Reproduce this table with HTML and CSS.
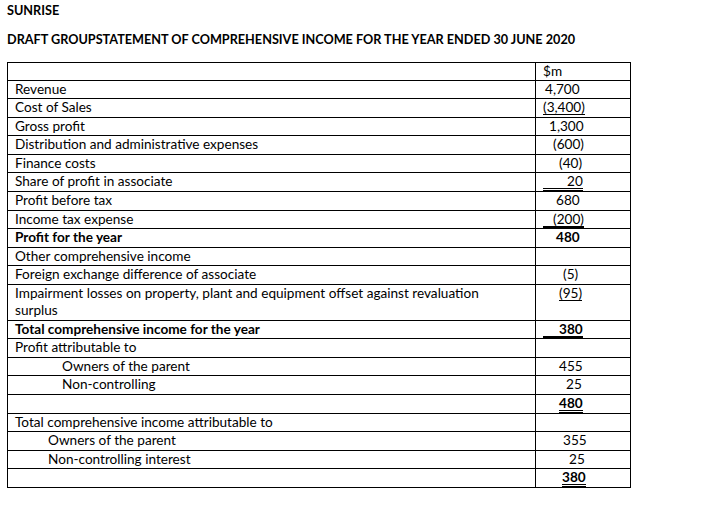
FILE: index.html
```html
<!DOCTYPE html>
<html>
<head>
<meta charset="utf-8">
<link rel="stylesheet" href="styles.css">
</head>
<body>
<div class="page">
  <h1 class="title first">SUNRISE</h1>
  <h2 class="title heading">DRAFT GROUPSTATEMENT OF COMPREHENSIVE INCOME FOR THE YEAR ENDED 30 JUNE 2020</h2>
  <table class="stmt">
    <tr class="head"><td class="label"></td><td class="num"><span class="o0">$m</span></td></tr>
    <tr><td class="label">Revenue</td><td class="num"><span class="o2">4,700</span></td></tr>
    <tr><td class="label">Cost of Sales</td><td class="num"><span class="o0 u">(3,400)</span></td></tr>
    <tr><td class="label">Gross profit</td><td class="num"><span class="o6">1,300</span></td></tr>
    <tr><td class="label">Distribution and administrative expenses</td><td class="num"><span class="o10">(600)</span></td></tr>
    <tr><td class="label">Finance costs</td><td class="num"><span class="o16">(40)</span></td></tr>
    <tr><td class="label">Share of profit in associate</td><td class="num"><span class="uu p24">20</span></td></tr>
    <tr><td class="label">Profit before tax</td><td class="num"><span class="o13">680</span></td></tr>
    <tr><td class="label">Income tax expense</td><td class="num"><span class="ut p10">(200)</span></td></tr>
    <tr class="bold"><td class="label">Profit for the year</td><td class="num"><span class="o13">480</span></td></tr>
    <tr><td class="label">Other comprehensive income</td><td class="num"></td></tr>
    <tr><td class="label">Foreign exchange difference of associate</td><td class="num"><span class="o20">(5)</span></td></tr>
    <tr class="tall"><td class="label">Impairment losses on property, plant and equipment offset against revaluation surplus</td><td class="num"><span class="o16 u">(95)</span></td></tr>
    <tr class="bold"><td class="label">Total comprehensive income for the year</td><td class="num"><span class="ut p16">380</span></td></tr>
    <tr><td class="label">Profit attributable to</td><td class="num"></td></tr>
    <tr><td class="label indent-a">Owners of the parent</td><td class="num"><span class="o16">455</span></td></tr>
    <tr><td class="label indent-a">Non-controlling</td><td class="num"><span class="o23">25</span></td></tr>
    <tr><td class="label"></td><td class="num"><span class="o16 uu strong">480</span></td></tr>
    <tr><td class="label">Total comprehensive income attributable to</td><td class="num"></td></tr>
    <tr><td class="label indent-b">Owners of the parent</td><td class="num"><span class="o20">355</span></td></tr>
    <tr><td class="label indent-b">Non-controlling interest</td><td class="num"><span class="o26">25</span></td></tr>
    <tr><td class="label"></td><td class="num"><span class="o19 uu strong">380</span></td></tr>
  </table>
</div>
</body>
</html>
```
FILE: styles.css
```css
html, body {
  margin: 0;
  padding: 0;
  background: #ffffff;
}

body {
  font-family: Lato, "Open Sans", sans-serif;
  font-size: 13.6px;
  color: #000000;
}

.page {
  padding: 0 0 0 7px;
}

.title {
  margin: 0;
  font-size: 12.67px;
  font-weight: 700;
  line-height: 18px;
}

.first {
  padding-top: 1px;
}

.heading {
  margin-top: 11px;
}

.stmt {
  margin-top: 14px;
  border-collapse: collapse;
  width: 624px;
}

.stmt td {
  border: 1px solid #000000;
  height: 17.5px;
  line-height: 17.5px;
  vertical-align: top;
}

.stmt .head td {
  height: 16.5px;
  line-height: 16.5px;
}

.stmt .tall td {
  height: 35px;
}

.stmt .label {
  padding: 0 20px 0 7px;
}

.stmt .num {
  width: 87px;
  padding: 0 0 0 7px;
}

.stmt .indent-a {
  padding-left: 54px;
}

.stmt .indent-b {
  padding-left: 40px;
}

.bold td {
  font-weight: 700;
}

.strong {
  font-weight: 700;
}

.num span {
  display: inline-block;
  line-height: 13px;
  vertical-align: baseline;
}

.u {
  border-bottom: 1px solid #000000;
}

.uu {
  border-bottom: 3px double #000000;
}

.ut {
  border-bottom: 2px solid #000000;
}

.o0 { margin-left: 0; }
.o2 { margin-left: 2px; }
.o6 { margin-left: 6px; }
.o10 { margin-left: 10px; }
.o13 { margin-left: 13px; }
.o16 { margin-left: 16px; }
.o19 { margin-left: 19px; }
.o20 { margin-left: 20px; }
.o23 { margin-left: 23px; }
.o26 { margin-left: 26px; }

.p10 { padding-left: 10px; }
.p16 { padding-left: 16px; }
.p24 { padding-left: 24px; }
```
